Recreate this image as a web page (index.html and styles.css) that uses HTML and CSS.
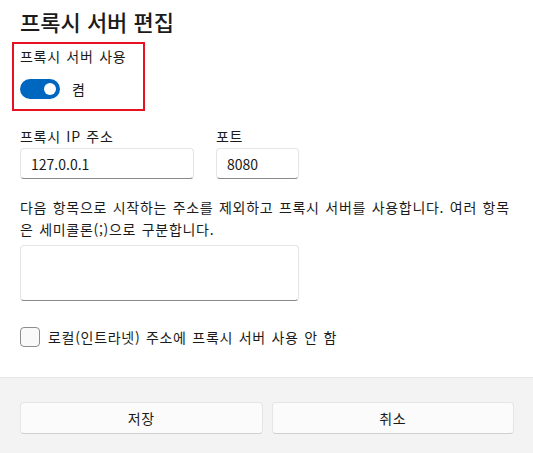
FILE: index.html
```html
<!DOCTYPE html>
<html lang="ko">

<head>
    <meta charset="UTF-8">
    <meta name="viewport" content="width=device-width, initial-scale=1.0">
    <title>프록시 서버 편집</title>
    <link rel="stylesheet" href="styles.css">
</head>

<body>
    <div class="dialog">
        <div class="content">
            <h1 class="title">프록시 서버 편집</h1>

            <div class="highlight">
                <div class="label">프록시 서버 사용</div>
                <div class="toggle-row">
                    <span class="toggle on"><span class="knob"></span></span>
                    <span class="toggle-text">켬</span>
                </div>
            </div>

            <div class="fields">
                <div class="field">
                    <div class="label">프록시 IP 주소</div>
                    <div class="textbox ip">127.0.0.1</div>
                </div>
                <div class="field">
                    <div class="label">포트</div>
                    <div class="textbox port">8080</div>
                </div>
            </div>

            <p class="desc">다음 항목으로 시작하는 주소를 제외하고 프록시 서버를 사용합니다. 여러 항목은 세미콜론(;)으로 구분합니다.</p>
            <div class="textbox area"></div>

            <div class="check-row">
                <span class="checkbox"></span>
                <span>로컬(인트라넷) 주소에 프록시 서버 사용 안 함</span>
            </div>
        </div>

        <div class="footer">
            <div class="btn">저장</div>
            <div class="btn">취소</div>
        </div>
    </div>
</body>

</html>
```

FILE: styles.css
```css
* {
    box-sizing: border-box;
}

body {
    margin: 0;
    background: #fff;
    color: #1b1b1b;
    font-family: "Noto Sans CJK KR", "Noto Sans", sans-serif;
    font-size: 14px;
    line-height: 20px;
    letter-spacing: 0.7px;
    word-spacing: 1px;
}

.dialog {
    height: 100vh;
    display: flex;
    flex-direction: column;
}

.content {
    padding: 0 20px;
}

.title {
    margin: 7px 0 0;
    font-size: 22px;
    line-height: 28px;
    font-weight: 500;
    letter-spacing: 0;
    word-spacing: 0;
}

.highlight {
    width: 133px;
    margin: 7px 0 0 -8px;
    padding: 2px 6px 10px;
    border: 2px solid #e81123;
}

.toggle-row {
    display: flex;
    align-items: center;
    gap: 12px;
    margin-top: 13px;
}

.toggle {
    width: 40px;
    height: 20px;
    border-radius: 10px;
    background: #0067c0;
    display: flex;
    align-items: center;
    justify-content: flex-end;
    padding-right: 4px;
}

.knob {
    width: 12px;
    height: 12px;
    border-radius: 50%;
    background: #fff;
}

.fields {
    display: flex;
    gap: 22px;
    margin-top: 15px;
}

.field .label {
    margin-bottom: 2px;
}

.textbox {
    height: 31px;
    padding: 5px 10px;
    background: #fff;
    border: 1px solid #e5e5e5;
    border-bottom-color: #8a8a8a;
    border-radius: 4px;
    letter-spacing: 0;
}

.ip {
    width: 174px;
}

.port {
    width: 83px;
}

.desc {
    margin: 17px 0 0;
    line-height: 22px;
}

.area {
    width: 279px;
    height: 56px;
    margin-top: 5px;
}

.check-row {
    display: flex;
    align-items: center;
    gap: 8px;
    margin-top: 26px;
}

.checkbox {
    width: 20px;
    height: 20px;
    border: 1px solid #8d8d8d;
    border-radius: 4px;
    background: #f9f9f9;
}

.footer {
    margin-top: auto;
    display: flex;
    gap: 9px;
    padding: 24px 19px 19px 20px;
    background: #f3f3f3;
    border-top: 1px solid #e5e5e5;
}

.btn {
    flex: 1;
    height: 32px;
    display: flex;
    align-items: center;
    justify-content: center;
    background: #fbfbfb;
    border: 1px solid #e5e5e5;
    border-bottom-color: #d0d0d0;
    border-radius: 4px;
}
```
